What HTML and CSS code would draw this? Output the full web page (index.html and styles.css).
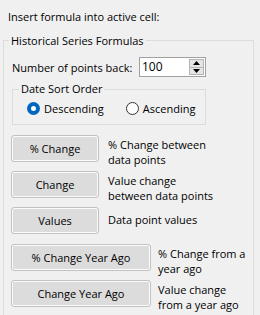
FILE: index.html
```html
<!DOCTYPE html>
<html lang="en">
<head>
    <meta charset="UTF-8">
    <title>Insert Formula</title>
    <link rel="stylesheet" href="styles.css">
</head>
<body>

    <div class="intro">Insert formula into active cell:</div>

    <fieldset class="group">
        <legend>Historical Series Formulas</legend>

        <div class="points-row">
            <span class="points-label">Number of points back:</span>
            <div class="spin-box">
                <span class="spin-value">100</span>
                <div class="spin-buttons">
                    <div class="spin-btn"><svg width="7" height="4" viewBox="0 0 7 4"><path d="M0 4 L3.5 0 L7 4 Z" fill="#000"/></svg></div>
                    <div class="spin-btn"><svg width="7" height="4" viewBox="0 0 7 4"><path d="M0 0 L7 0 L3.5 4 Z" fill="#000"/></svg></div>
                </div>
            </div>
        </div>

        <fieldset class="sort-group">
            <legend>Date Sort Order</legend>
            <div class="radio-row">
                <label class="radio"><span class="radio-dot checked"></span>Descending</label>
                <label class="radio"><span class="radio-dot"></span>Ascending</label>
            </div>
        </fieldset>

        <div class="formula-row first">
            <div class="btn">% Change</div>
            <div class="desc two-line">% Change between<br>data points</div>
        </div>
        <div class="formula-row">
            <div class="btn">Change</div>
            <div class="desc two-line">Value change<br>between data points</div>
        </div>
        <div class="formula-row">
            <div class="btn">Values</div>
            <div class="desc">Data point values</div>
        </div>

        <div class="formula-row wide first-wide">
            <div class="btn">% Change Year Ago</div>
            <div class="desc two-line">% Change from a<br>year ago</div>
        </div>
        <div class="formula-row wide">
            <div class="btn">Change Year Ago</div>
            <div class="desc two-line">Value change<br>from a year ago</div>
        </div>
    </fieldset>

</body>
</html>
```

FILE: styles.css
```css
body { background: #f0f0f0; color: #000; font-family: "Segoe UI", "Open Sans", sans-serif; font-size: 11px; margin: 0; overflow: hidden; }

.intro { padding: 9px 0 0 8px; line-height: 15px; height: 24px; }

.group {
    margin: 0 0 0 3px; width: 247px; height: 300px; box-sizing: border-box;
    border: 1px solid #dcdcdc; padding: 0 8px 0 7px;
}
.group > legend { padding: 0 2px; margin-left: -2px; line-height: 15px; }

.points-row { display: flex; align-items: center; margin-top: 9px; height: 20px; }
.points-label { width: 127px; padding-left: 1px; }
.spin-box {
    display: flex; width: 67px; height: 20px; box-sizing: border-box;
    border: 1px solid #a0a0a0; background: #fff;
}
.spin-value { flex: 1; padding-left: 2px; line-height: 18px; font-size: 12px; }
.spin-buttons { display: flex; flex-direction: column; width: 15px; margin: 1px 1px 1px 0; border: 1px solid #b4b4b4; box-sizing: border-box; }
.spin-btn { flex: 1; display: flex; align-items: center; justify-content: center; background: #e5e5e5; }
.spin-btn + .spin-btn { border-top: 1px solid #b4b4b4; }

.sort-group {
    margin: 5px 0 0 1px; width: 194px; height: 43px; box-sizing: border-box;
    border: 1px solid #dcdcdc; padding: 0 8px;
}
.sort-group > legend { padding: 0 2px; margin-left: -2px; line-height: 14px; }
.radio-row { display: flex; padding-left: 6px; margin-top: 5px; }
.radio { display: flex; align-items: center; line-height: 15px; }
.radio + .radio { margin-left: 22px; }
.radio-dot {
    width: 13px; height: 13px; box-sizing: border-box; border-radius: 50%;
    border: 1px solid #333; background: #fff; margin-right: 4px;
}
.radio-dot.checked { border: 4px solid #0067c0; background: #fff; }

.formula-row { display: flex; align-items: flex-start; height: 27px; margin-top: 9px; }
.formula-row.first { margin-top: 10px; }
.formula-row.first-wide { margin-top: 10px; }
.btn {
    width: 88px; height: 27px; box-sizing: border-box; flex-shrink: 0;
    border: 1px solid #c2c2c2; border-radius: 3px; background: #dcdcdc;
    box-shadow: inset 0 0 0 1px #fbfbfb;
    display: flex; align-items: center; justify-content: center;
}
.wide .btn { width: 140px; }
.desc { margin-left: 9px; line-height: 14.5px; white-space: nowrap; align-self: center; }
.wide .desc { margin-left: 7px; }
.desc.two-line { align-self: flex-start; margin-top: 3px; }
```
